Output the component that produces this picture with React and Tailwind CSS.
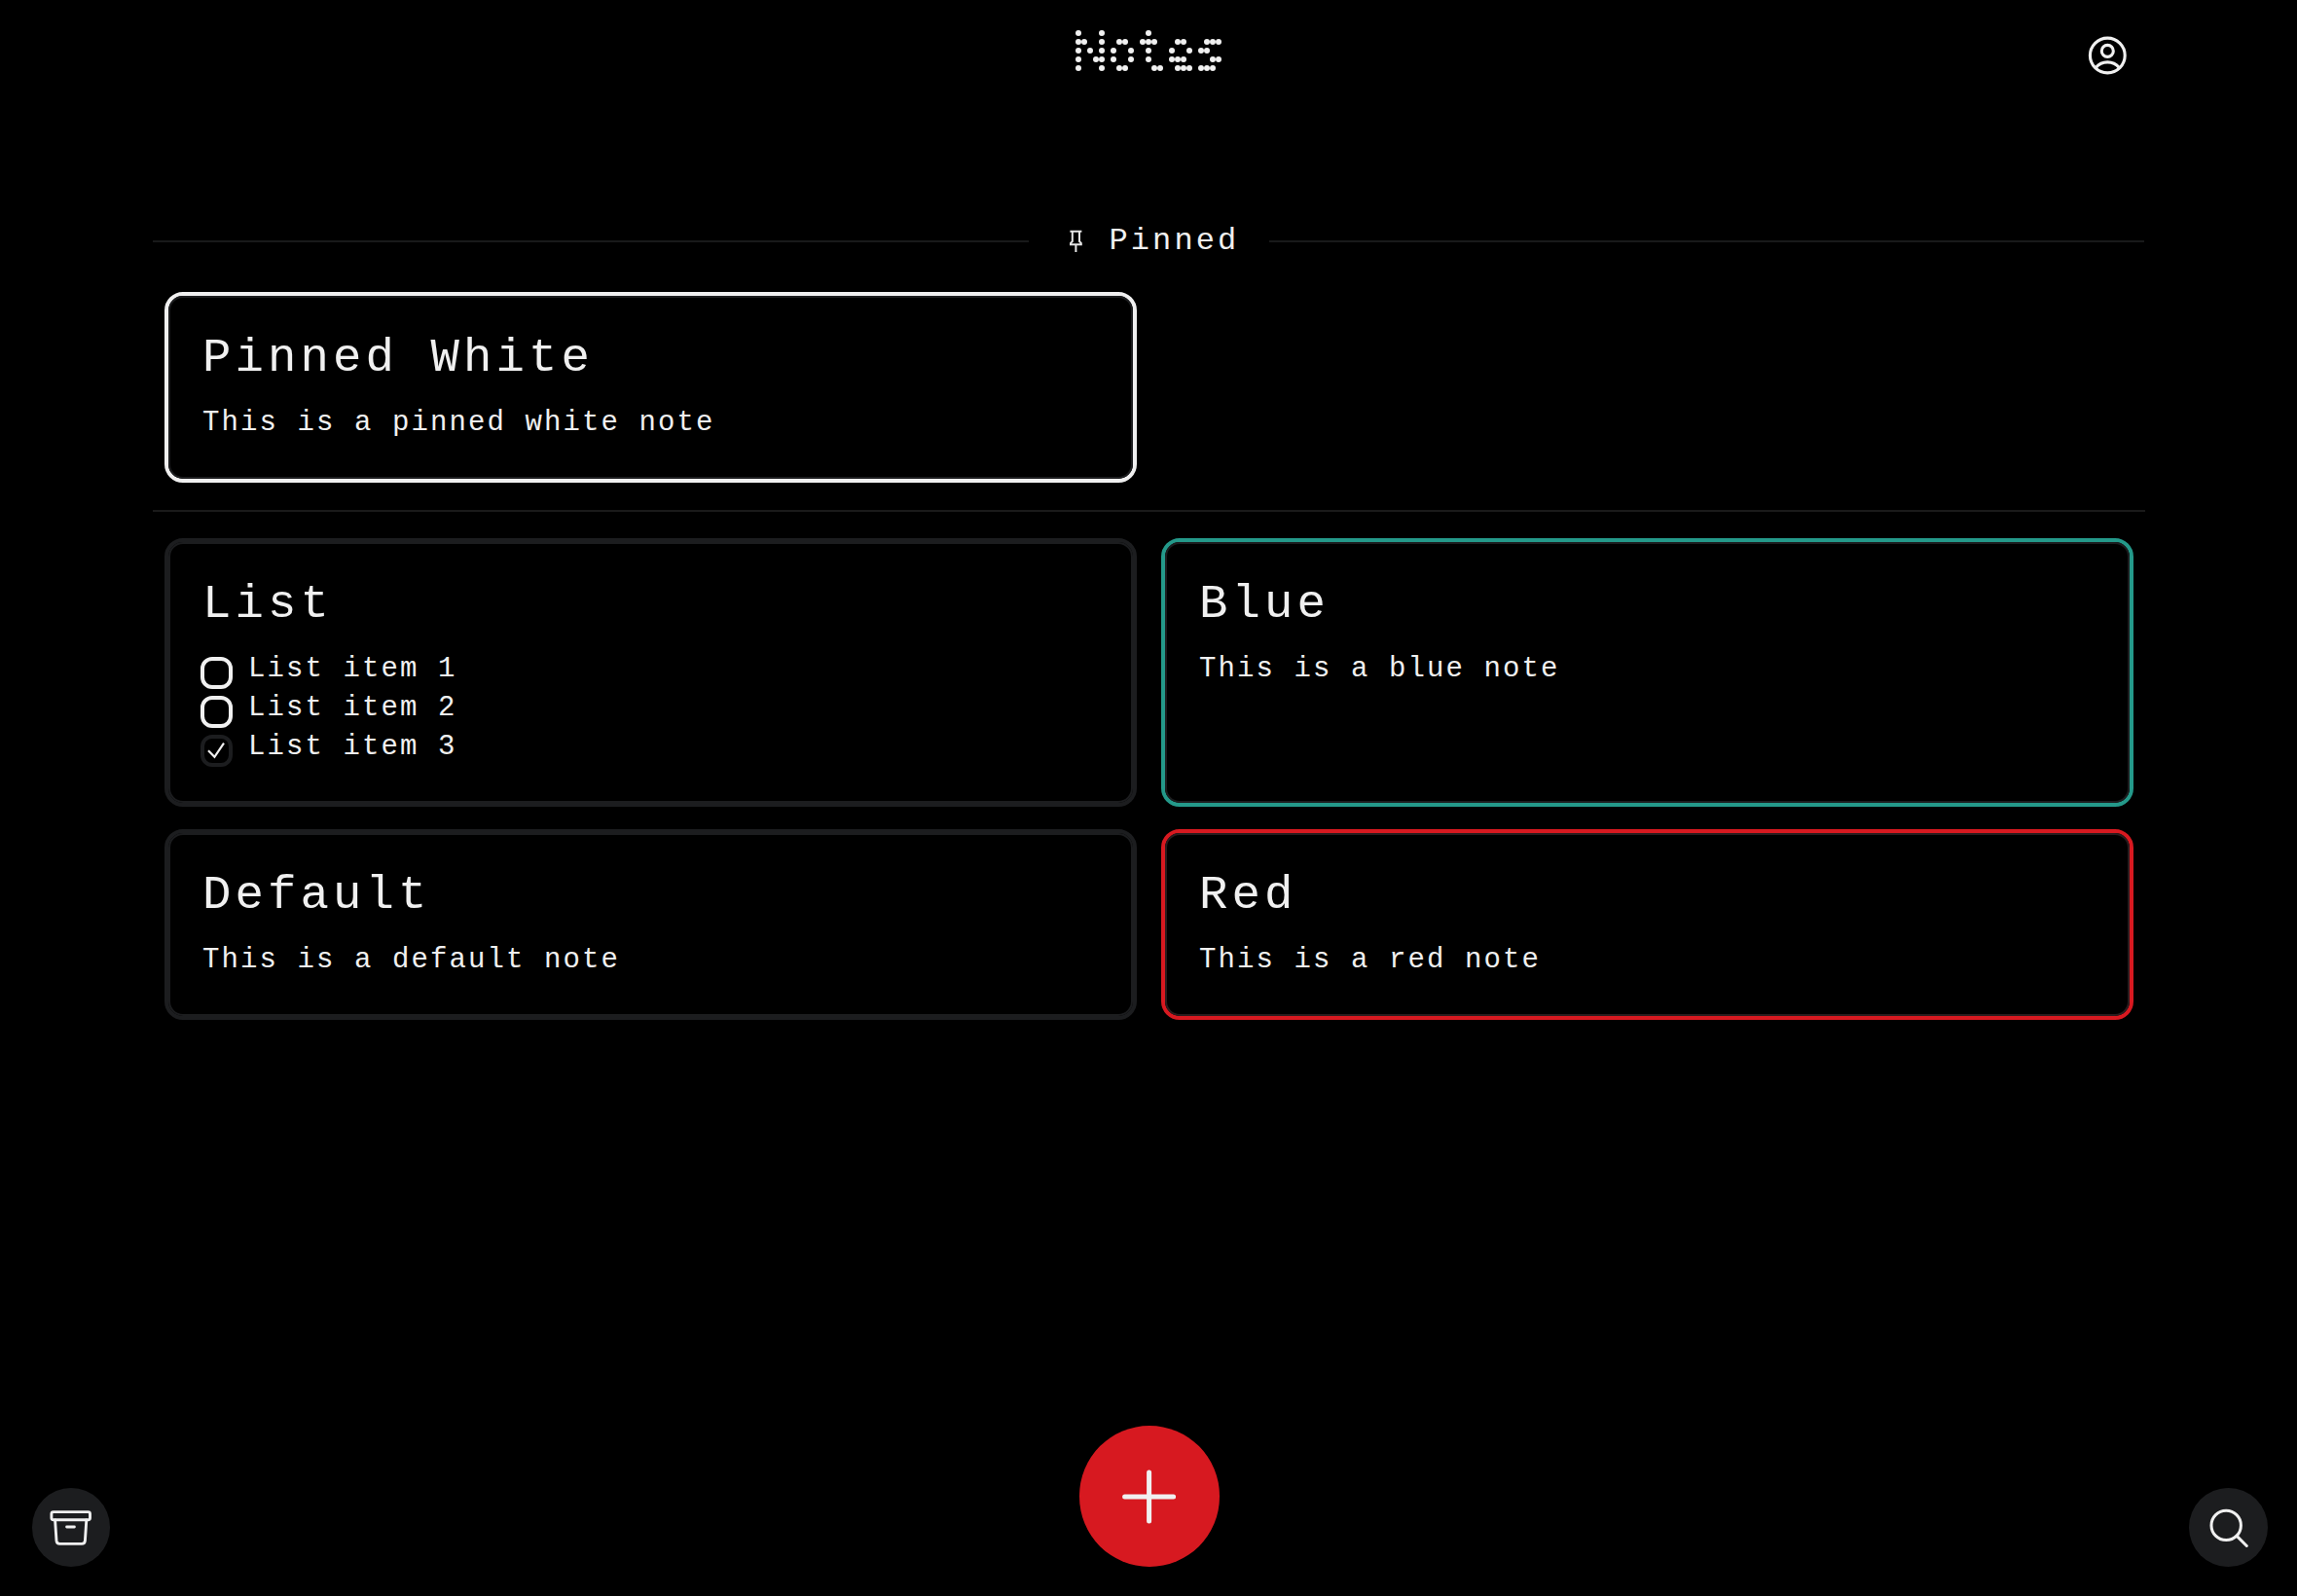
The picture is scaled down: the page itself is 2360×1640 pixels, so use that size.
const WORDMARK = [
  "#...#.......#............",
  "##..#..##..###...##...###",
  "#.#.#.#..#..#...#..#.##..",
  "#..##.#..#..#...###....##",
  "#...#..##....##..###.###.",
];

const TONES = {
  white: { outer: "border-[#f0f0f0]", inner: "border-[#1c1d1f]" },
  plain: { outer: "border-[#1c1d1f]", inner: "border-[#1c1d1f]" },
  teal: { outer: "border-[#24998a]", inner: "border-[#1c1d1f]" },
  red: { outer: "border-[#d71920]", inner: "border-[#2a1c1e]" },
};

function Wordmark() {
  return (
    <h1 aria-label="Notes" className="grid auto-rows-[9px] grid-cols-[repeat(25,6px)]">
      {WORDMARK.join("")
        .split("")
        .map((cell, i) => (
          <span key={i} className={cell === "#" ? "size-[6.4px] rounded-full bg-[#f0f0f0]" : "size-[6px]"} />
        ))}
    </h1>
  );
}

function ProfileIcon() {
  return (
    <svg className="size-10" viewBox="0 0 40 40" fill="none" stroke="#f0f0f0" strokeWidth="3.1" strokeLinecap="round">
      <circle cx="20.3" cy="20" r="17.9" />
      <circle cx="20.3" cy="15.4" r="6" />
      <path d="M8.3 32.5C11.3 28.9 15.4 26.9 20.3 26.9S29.3 28.9 32.3 32.5" />
    </svg>
  );
}

function PinIcon() {
  return (
    <svg className="h-6 w-4" viewBox="0 0 16 24" fill="none" stroke="#e6e6e6" strokeWidth="2">
      <path d="M1.4 1.8H13.4M3.8 2V12L2 13.8V15.2H12.8V13.8L11 12V2M7.4 15.2V23" />
    </svg>
  );
}

function ArchiveIcon() {
  return (
    <svg className="h-9 w-11" viewBox="0 0 44 36" fill="none" stroke="#f0f0f0" strokeWidth="2.9" strokeLinecap="round" strokeLinejoin="round">
      <rect x="1.9" y="1.6" width="39.6" height="8.2" rx="2" />
      <path d="M5.6 10L7 31.2Q7.3 34.4 10.5 34.4H32.9Q36.1 34.4 36.4 31.2L37.8 10M17.6 17H25.4" />
    </svg>
  );
}

function SearchIcon() {
  return (
    <svg className="size-10" viewBox="0 0 40 40" fill="none" stroke="#f0f0f0" strokeWidth="3" strokeLinecap="round">
      <circle cx="17.2" cy="17.4" r="15.2" />
      <path d="M28.2 28.4L38.3 38.5" />
    </svg>
  );
}

function Checkbox({ checked }) {
  return (
    <span
      className={
        "mt-[6.5px] -ml-[2px] flex size-[33px] shrink-0 items-center justify-center rounded-[12px] border-4 " +
        (checked ? "border-[#1c1d1f]" : "border-[#f0f0f0]")
      }
    >
      {checked && (
        <svg className="size-5 shrink-0" viewBox="0 0 20 20" fill="none" stroke="#f0f0f0" strokeWidth="2.2">
          <path d="M1 10.2L7.4 16.8L17 2.6" />
        </svg>
      )}
    </span>
  );
}

function Note({ title, tone, children }) {
  const t = TONES[tone];
  return (
    <article className={"rounded-[19px] border-4 " + t.outer}>
      <div className={"h-full rounded-[15px] border-2 pt-[32px] pr-[32px] pb-[35px] pl-[33px] " + t.inner}>
        <h2 className="text-[49px] leading-[60px] tracking-[4.1px]">{title}</h2>
        <div className="mt-[17px] text-[29px] leading-[40px] tracking-[2.1px]">{children}</div>
      </div>
    </article>
  );
}

const items = [
  { text: "List item 1", checked: false },
  { text: "List item 2", checked: false },
  { text: "List item 3", checked: true },
];

export default function App() {
  return (
    <div className="flex h-[1640px] w-[2360px] flex-col bg-black font-['Liberation_Mono',monospace] text-[#f0f0f0]">
      <header className="grid h-[218px] grid-cols-[1fr_auto_1fr] items-start px-[175px]">
        <span />
        <div className="pt-[31px]">
          <Wordmark />
        </div>
        <button className="mt-[37px] justify-self-end">
          <ProfileIcon />
        </button>
      </header>

      <main className="flex-1 pr-[156px] pl-[157px]">
        <div className="flex h-[60px] items-center pr-px">
          <hr className="flex-1 border-t-2 border-[#18191a]" />
          <div className="flex w-[247px] items-center pl-[41px]">
            <PinIcon />
            <span className="ml-[26px] text-[32px] leading-[40px] tracking-[3.1px]">Pinned</span>
          </div>
          <hr className="flex-1 border-t-2 border-[#18191a]" />
        </div>

        <section className="mt-[22px] grid grid-cols-2 gap-[25px] px-3">
          <Note title="Pinned White" tone="white">
            <p>This is a pinned white note</p>
          </Note>
        </section>

        <hr className="mt-[28px] border-t-2 border-[#1a1a1a]" />

        <section className="mt-[27px] grid grid-cols-2 gap-x-[25px] gap-y-[23px] px-3">
          <Note title="List" tone="plain">
            <ul>
              {items.map((item) => (
                <li key={item.text} className="flex h-10 items-start gap-[16px]">
                  <Checkbox checked={item.checked} />
                  <span>{item.text}</span>
                </li>
              ))}
            </ul>
          </Note>
          <Note title="Blue" tone="teal">
            <p>This is a blue note</p>
          </Note>
          <Note title="Default" tone="plain">
            <p>This is a default note</p>
          </Note>
          <Note title="Red" tone="red">
            <p>This is a red note</p>
          </Note>
        </section>
      </main>

      <footer className="flex items-end justify-between pr-[30px] pb-[30px] pl-[33px]">
        <button className="flex h-[81px] w-[80px] items-center justify-center rounded-full bg-[#1c1d1f]">
          <ArchiveIcon />
        </button>
        <button className="flex h-[145px] w-[144px] items-center justify-center rounded-full bg-[#d71920]">
          <svg className="size-14" viewBox="0 0 56 56" stroke="#f0f0f0" strokeWidth="5" strokeLinecap="round">
            <path d="M27.6 3V53M2.6 28H52.6" />
          </svg>
        </button>
        <button className="flex h-[81px] w-[81px] items-center justify-center rounded-full bg-[#1c1d1f]">
          <SearchIcon />
        </button>
      </footer>
    </div>
  );
}
